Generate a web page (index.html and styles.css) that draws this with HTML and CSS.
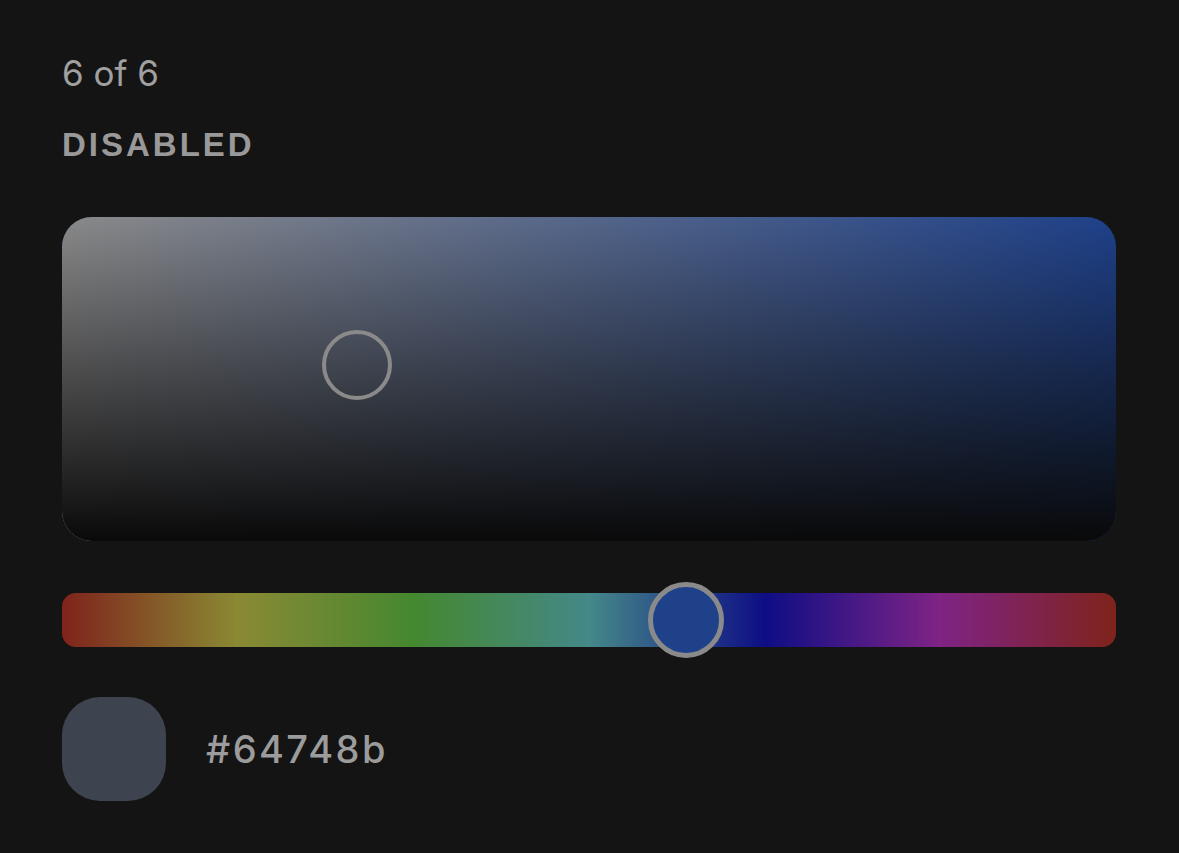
FILE: index.html
```html
<!DOCTYPE html>
<html lang="en">
<head>
<meta charset="utf-8">
<title>Color picker – disabled</title>
<link rel="stylesheet" href="styles.css">
</head>
<body>
<main class="page">
  <div class="count">6 of 6</div>
  <div class="label">DISABLED</div>
  <div class="picker">
    <div class="sat">
      <div class="sat-white"></div>
      <div class="sat-black"></div>
      <div class="sat-thumb"></div>
    </div>
    <div class="hue">
      <div class="hue-thumb"></div>
    </div>
  </div>
  <div class="result">
    <div class="swatch"></div>
    <div class="hex">#64748b</div>
  </div>
</main>
</body>
</html>
```

FILE: styles.css
```css
html, body {
  margin: 0;
  padding: 0;
  background: #141414;
}

body {
  font-family: "Liberation Sans", Arial, sans-serif;
}

.page {
  width: 1054px;
  padding: 52px 0 0 62px;
  display: flex;
  flex-direction: column;
}

.count {
  font-family: Inter, "Liberation Sans", sans-serif;
  font-size: 35px;
  line-height: 42px;
  color: #a0a0a0;
}

.label {
  margin-top: 31px;
  font-size: 33px;
  line-height: 40px;
  font-weight: 700;
  letter-spacing: 3px;
  color: #999999;
}

.picker {
  margin-top: 52px;
  display: flex;
  flex-direction: column;
  gap: 52px;
  opacity: 0.5;
}

.sat {
  position: relative;
  height: 324px;
  border-radius: 30px;
  background: #2a6eff;
}

.sat-white,
.sat-black {
  position: absolute;
  inset: 0;
  border-radius: 30px;
}

.sat-white {
  background: linear-gradient(to right, #ffffff, rgba(255, 255, 255, 0));
}

.sat-black {
  background: linear-gradient(to top, #000000, rgba(0, 0, 0, 0));
}

.sat-thumb {
  position: absolute;
  left: 28%;
  top: 45.7%;
  width: 62px;
  height: 62px;
  border: 4px solid #ffffff;
  border-radius: 50%;
  transform: translate(-50%, -50%);
}

.hue {
  position: relative;
  height: 54px;
  border-radius: 14px;
  background: linear-gradient(to right,
    rgb(234, 51, 35),
    rgb(255, 254, 84),
    rgb(117, 251, 76),
    rgb(117, 251, 253),
    rgb(8, 8, 245),
    rgb(234, 51, 245),
    rgb(234, 51, 35));
}

.hue-thumb {
  position: absolute;
  left: 59.2%;
  top: 50%;
  width: 66px;
  height: 66px;
  border: 5px solid #ffffff;
  border-radius: 50%;
  background: #2a6eff;
  transform: translate(-50%, -50%);
}

.result {
  margin-top: 50px;
  display: flex;
  align-items: center;
  gap: 40px;
}

.swatch {
  width: 104px;
  height: 104px;
  border-radius: 38px;
  background: #3d444f;
}

.hex {
  font-family: Inter, "Liberation Sans", sans-serif;
  font-weight: 500;
  font-size: 38px;
  line-height: 44px;
  letter-spacing: 2.4px;
  color: #9c9c9c;
}
```
